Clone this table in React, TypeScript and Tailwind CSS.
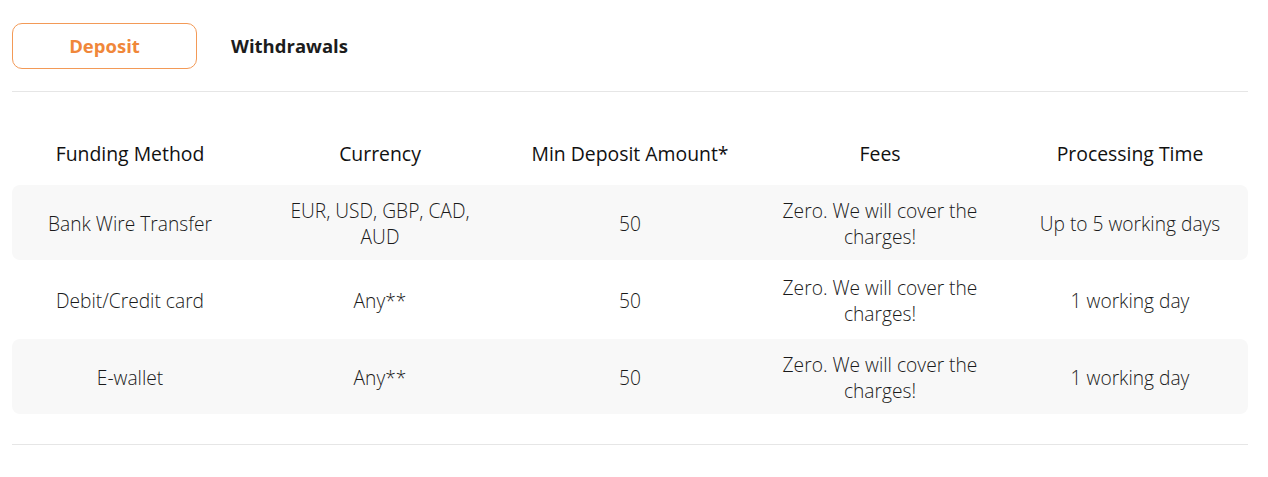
const rows = [
  {
    method: 'Bank Wire Transfer',
    currency: 'EUR, USD, GBP, CAD, AUD',
    min: '50',
    fees: 'Zero. We will cover the charges!',
    time: 'Up to 5 working days',
  },
  {
    method: 'Debit/Credit card',
    currency: 'Any**',
    min: '50',
    fees: 'Zero. We will cover the charges!',
    time: '1 working day',
  },
  {
    method: 'E-wallet',
    currency: 'Any**',
    min: '50',
    fees: 'Zero. We will cover the charges!',
    time: '1 working day',
  },
];

const headers = ['Funding Method', 'Currency', 'Min Deposit Amount*', 'Fees', 'Processing Time'];

export default function App() {
  return (
    <div
      className="min-h-[477px] bg-white pl-3 pr-5 pt-[23px] text-[18px] leading-[26px]"
      style={{ fontFamily: '"Open Sans", "Noto Sans", sans-serif' }}
    >
      {/* Tabs */}
      <div className="flex">
        <button className="flex h-[46px] w-[185px] items-center justify-center rounded-[10px] border border-[#f39a57] text-[18.5px] font-bold text-[#f0873a]">
          Deposit
        </button>
        <button className="flex h-[46px] w-[185px] items-center justify-center text-[18.5px] font-bold text-[#1c1c1c]">
          Withdrawals
        </button>
      </div>

      <div className="mt-[22px] h-px bg-[#e6e6e6]" />

      {/* Table */}
      <div className="mt-[49px]">
        <div className="-mx-[7px] grid grid-cols-5 text-center text-[19.4px] text-[#111]">
          {headers.map((h) => (
            <div key={h} className="px-4">
              {h}
            </div>
          ))}
        </div>

        <div className="mt-[18px] flex flex-col gap-[2px]">
          {rows.map((r, i) => (
            <div
              key={r.method}
              className={`flex h-[75px] items-center rounded-[8px] pt-[3px] ${i % 2 === 0 ? 'bg-[#f8f8f8]' : ''}`}
            >
              <div className="-mx-[7px] grid flex-1 grid-cols-5 items-center text-center text-[19.2px] font-light text-[#1a1a1a]">
                <div className="px-4">{r.method}</div>
                <div className="px-4">{r.currency}</div>
                <div className="px-4">{r.min}</div>
                <div className="px-4">{r.fees}</div>
                <div className="px-4">{r.time}</div>
              </div>
            </div>
          ))}
        </div>
      </div>

      <div className="mt-[30px] h-px bg-[#e6e6e6]" />
    </div>
  );
}
